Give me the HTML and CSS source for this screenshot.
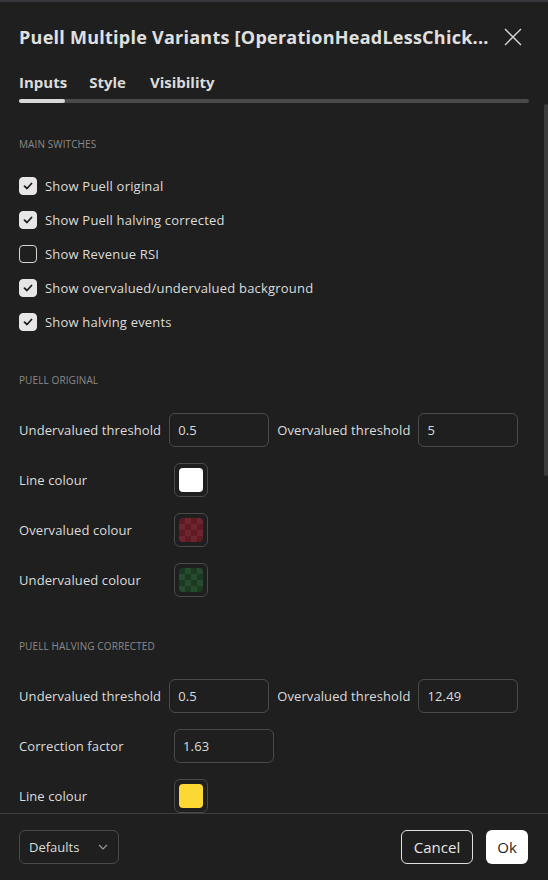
FILE: index.html
```html
<!DOCTYPE html>
<html>
<head>
<meta charset="utf-8">
<link rel="stylesheet" href="styles.css">
</head>
<body>
<div class="dialog">
  <div class="topstrip"></div>
  <div class="header">
    <div class="title">Puell Multiple Variants [OperationHeadLessChick...</div>
    <svg class="close" width="18" height="18" viewBox="0 0 18 18"><path d="M1 1L17 17M17 1L1 17" stroke="#d6d6d6" stroke-width="1.4" fill="none"/></svg>
  </div>
  <div class="tabs">
    <span class="tab">Inputs</span>
    <span class="tab">Style</span>
    <span class="tab">Visibility</span>
  </div>
  <div class="track"><div class="track-active"></div></div>
  <div class="body">
    <div class="content">
      <div class="section first">MAIN SWITCHES</div>
      <div class="checks">
        <div class="check"><span class="box on"><svg width="12" height="12" viewBox="0 0 12 12"><path d="M2.5 6.2L5 8.5L9.5 3.5" stroke="#1f1f1f" stroke-width="1.8" fill="none" stroke-linecap="round" stroke-linejoin="round"/></svg></span>Show Puell original</div>
        <div class="check"><span class="box on"><svg width="12" height="12" viewBox="0 0 12 12"><path d="M2.5 6.2L5 8.5L9.5 3.5" stroke="#1f1f1f" stroke-width="1.8" fill="none" stroke-linecap="round" stroke-linejoin="round"/></svg></span>Show Puell halving corrected</div>
        <div class="check"><span class="box"></span>Show Revenue RSI</div>
        <div class="check"><span class="box on"><svg width="12" height="12" viewBox="0 0 12 12"><path d="M2.5 6.2L5 8.5L9.5 3.5" stroke="#1f1f1f" stroke-width="1.8" fill="none" stroke-linecap="round" stroke-linejoin="round"/></svg></span>Show overvalued/undervalued background</div>
        <div class="check"><span class="box on"><svg width="12" height="12" viewBox="0 0 12 12"><path d="M2.5 6.2L5 8.5L9.5 3.5" stroke="#1f1f1f" stroke-width="1.8" fill="none" stroke-linecap="round" stroke-linejoin="round"/></svg></span>Show halving events</div>
      </div>

      <div class="section">PUELL ORIGINAL</div>
      <div class="rows">
        <div class="row">
          <span class="lbl">Undervalued threshold</span>
          <span class="input">0.5</span>
          <span class="lbl">Overvalued threshold</span>
          <span class="input">5</span>
        </div>
        <div class="row">
          <span class="lbl fixed">Line colour</span>
          <span class="swatch"><span class="fill white"></span></span>
        </div>
        <div class="row">
          <span class="lbl fixed">Overvalued colour</span>
          <span class="swatch"><span class="fill red"></span></span>
        </div>
        <div class="row">
          <span class="lbl fixed">Undervalued colour</span>
          <span class="swatch"><span class="fill green"></span></span>
        </div>
      </div>

      <div class="section">PUELL HALVING CORRECTED</div>
      <div class="rows">
        <div class="row">
          <span class="lbl">Undervalued threshold</span>
          <span class="input">0.5</span>
          <span class="lbl">Overvalued threshold</span>
          <span class="input">12.49</span>
        </div>
        <div class="row">
          <span class="lbl fixed">Correction factor</span>
          <span class="input">1.63</span>
        </div>
        <div class="row">
          <span class="lbl fixed">Line colour</span>
          <span class="swatch"><span class="fill yellow"></span></span>
        </div>
      </div>
    </div>
    <div class="scrollbar"></div>
  </div>
  <div class="footer">
    <div class="select">Defaults<svg width="10" height="6" viewBox="0 0 10 6"><path d="M1 1L5 5L9 1" stroke="#9a9a9a" stroke-width="1.2" fill="none"/></svg></div>
    <div class="spacer"></div>
    <div class="btn cancel">Cancel</div>
    <div class="btn ok">Ok</div>
  </div>
</div>
</body>
</html>
```
FILE: styles.css
```css
* { box-sizing: border-box; }
html, body { margin: 0; padding: 0; background: #1f1f1f; }
body {
  font-family: "Open Sans", "Noto Sans", sans-serif;
  color: #dbdbdb;
  font-size: 13px;
  width: 548px;
  height: 880px;
  overflow: hidden;
}
.dialog { width: 548px; height: 880px; display: flex; flex-direction: column; background: #1f1f1f; }
.topstrip { height: 2px; background: #38383c; flex: none; }
.header {
  display: flex; align-items: center; justify-content: space-between;
  padding: 0 26px 0 19px; height: 70px; flex: none;
}
.title { font-size: 18px; font-weight: 700; color: #e0e0e0; white-space: nowrap; letter-spacing: 0.25px; }
.close { flex: none; }
.tabs { display: flex; padding: 0 19px; height: 20px; align-items: center; flex: none; }
.tab { font-size: 15px; font-weight: 700; color: #dcdcdc; line-height: 20px; }
.tab + .tab { margin-left: 22px; }
.tab:nth-child(3) { margin-left: 24px; }
.track { margin: 7px 19px 0; height: 4px; background: #4a4a4a; border-radius: 2px; flex: none; }
.track-active { width: 46px; height: 4px; background: #d8d8d8; border-radius: 2px; }
.body { flex: 1; display: flex; overflow: hidden; position: relative; }
.content { flex: 1; padding: 0 19px; }
.scrollbar { position: absolute; right: 0; top: 1px; width: 4px; height: 372px; background: #3c3c3c; border-radius: 2px; }
.section { font-size: 10px; line-height: 14px; color: #8a8a8a; text-transform: uppercase; margin: 42px 0 26px; letter-spacing: 0.1px; }
.section.first { margin-top: 34px; }
.checks { display: flex; flex-direction: column; gap: 16px; }
.check { display: flex; align-items: center; gap: 8px; height: 18px; font-size: 13px; color: #dcdcdc; letter-spacing: 0.2px; white-space: nowrap; }
.box { width: 18px; height: 18px; border-radius: 4px; border: 1px solid #d6d6d6; display: flex; align-items: center; justify-content: center; flex: none; }
.box.on { background: #e6e6e6; border-color: #e6e6e6; }
.rows { display: flex; flex-direction: column; gap: 16px; }
.row { display: flex; align-items: center; gap: 8px; height: 34px; }
.lbl { white-space: nowrap; font-size: 13px; color: #dcdcdc; letter-spacing: 0.1px; }
.lbl.fixed { width: 147px; flex: none; }
.input { width: 100px; height: 34px; border: 1px solid #4a4a4a; border-radius: 6px; display: flex; align-items: center; padding-left: 8px; font-size: 13px; color: #dcdcdc; flex: none; letter-spacing: 0.15px; }
.swatch { width: 34px; height: 34px; border: 1px solid #4a4a4a; border-radius: 6px; display: flex; align-items: center; justify-content: center; flex: none; }
.fill { width: 24px; height: 24px; border-radius: 4px; display: block; }
.fill.white { background: #ffffff; }
.fill.yellow { background: #fdd835; }
.fill.red {
  background-color: #5f1a23;
  background-image: linear-gradient(45deg, #6e2530 25%, transparent 25%, transparent 75%, #6e2530 75%), linear-gradient(45deg, #6e2530 25%, transparent 25%, transparent 75%, #6e2530 75%);
  background-size: 12px 12px; background-position: 0 0, 6px 6px;
}
.fill.green {
  background-color: #1c3a21;
  background-image: linear-gradient(45deg, #274b2d 25%, transparent 25%, transparent 75%, #274b2d 75%), linear-gradient(45deg, #274b2d 25%, transparent 25%, transparent 75%, #274b2d 75%);
  background-size: 12px 12px; background-position: 0 0, 6px 6px;
}
.footer { flex: none; height: 67px; border-top: 1px solid #3e3e3e; display: flex; align-items: center; padding: 0 20px 0 19px; gap: 13px; }
.spacer { flex: 1; }
.select { width: 100px; height: 34px; border: 1px solid #4a4a4a; border-radius: 6px; display: flex; align-items: center; justify-content: space-between; padding: 0 10px 0 9px; font-size: 13px; color: #dcdcdc; }
.btn { height: 34px; border-radius: 6px; display: flex; align-items: center; justify-content: center; font-size: 15px; }
.cancel { width: 72px; border: 1px solid #e0e0e0; color: #e6e6e6; }
.ok { width: 42px; background: #ffffff; color: #1f1f1f; }
```
